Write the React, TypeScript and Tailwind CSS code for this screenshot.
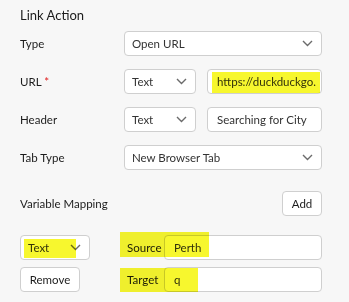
import React from 'react'

const FONT = { fontFamily: 'Lato, "Open Sans", sans-serif' }

function Chevron() {
  return (
    <svg width="11" height="7" viewBox="0 0 11 7" className="shrink-0">
      <path d="M1 1l4.5 4.5L10 1" fill="none" stroke="#6b6b6b" strokeWidth="1.4" />
    </svg>
  )
}

function Select({ value, className = '' }: { value: string; className?: string }) {
  return (
    <div className={`h-[25px] flex items-center justify-between pl-[7px] pr-[8px] bg-white border border-[#cfcfcf] rounded-[4px] text-[#333] ${className}`}>
      <span>{value}</span>
      <Chevron />
    </div>
  )
}

function Input({ value, className = '' }: { value: string; className?: string }) {
  return (
    <div className={`h-[25px] flex items-center px-[9px] bg-white border border-[#cfcfcf] rounded-[4px] text-[#333] whitespace-nowrap overflow-hidden ${className}`}>
      {value}
    </div>
  )
}

function Mark({ className }: { className: string }) {
  return <div className={`absolute bg-[#f7f72e] mix-blend-multiply pointer-events-none ${className}`} />
}

export default function App() {
  return (
    <div className="w-[349px] h-[302px] bg-[#f7f7f7] text-[11.5px] text-[#1c1c1c] relative" style={FONT}>
      <div className="pl-[20px] pr-[27px] pt-[4px]">
        <div className="text-[13px] leading-[22px]">Link Action</div>

        <div className="flex flex-col gap-[13px] mt-[5px]">
          <div className="flex items-center">
            <div className="w-[104px]">Type</div>
            <Select value="Open URL" className="flex-1" />
          </div>
          <div className="flex items-center">
            <div className="w-[104px]">
              URL <span className="text-[#e02020]">*</span>
            </div>
            <Select value="Text" className="w-[72px]" />
            <Input value="https://duckduckgo." className="ml-[11px] flex-1 w-0" />
          </div>
          <div className="flex items-center">
            <div className="w-[104px]">Header</div>
            <Select value="Text" className="w-[72px]" />
            <Input value="Searching for City" className="ml-[11px] flex-1 w-0" />
          </div>
          <div className="flex items-center">
            <div className="w-[104px]">Tab Type</div>
            <Select value="New Browser Tab" className="flex-1" />
          </div>
        </div>

        <div className="flex items-center justify-between mt-[21px]">
          <div>Variable Mapping</div>
          <button className="h-[25px] w-[40px] bg-white border border-[#cfcfcf] rounded-[4px]">Add</button>
        </div>

        <div className="flex flex-col gap-[7px] mt-[19px]">
          <div className="flex items-center">
            <Select value="Text" className="w-[70px] pl-[6px] pr-[5px]" />
            <div className="w-[44px] ml-[30px] pl-[7px]">Source</div>
            <Input value="Perth" className="flex-1" />
          </div>
          <div className="flex items-center">
            <button className="h-[25px] w-[60px] bg-white border border-[#cfcfcf] rounded-[4px]">Remove</button>
            <div className="w-[44px] ml-[40px] pl-[7px]">Target</div>
            <Input value="q" className="flex-1" />
          </div>
        </div>
      </div>

      <Mark className="left-[212px] top-[72px] w-[108px] h-[21px]" />
      <Mark className="left-[24px] top-[239px] w-[52px] h-[19px]" />
      <Mark className="left-[120px] top-[232px] w-[89px] h-[25px]" />
      <Mark className="left-[120px] top-[268px] w-[78px] h-[24px]" />
    </div>
  )
}
